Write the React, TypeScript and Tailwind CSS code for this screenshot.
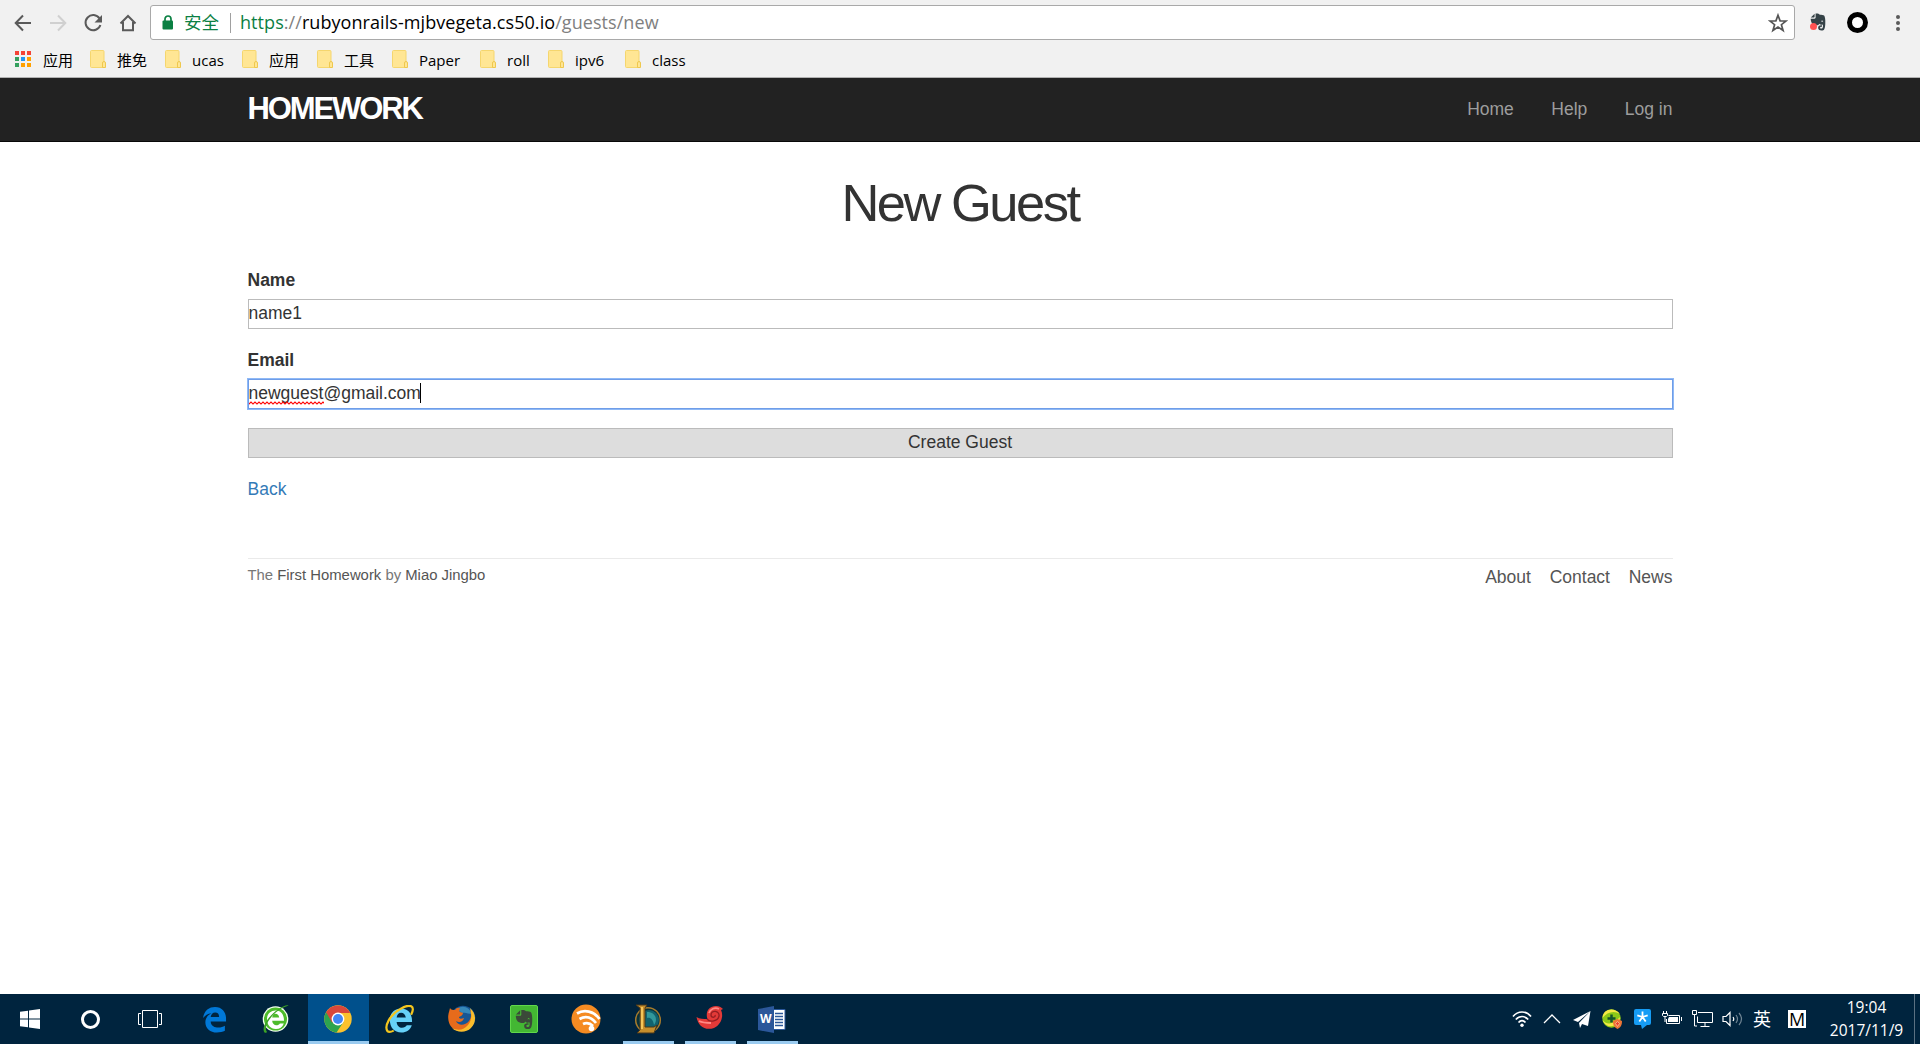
import type { ReactNode } from 'react';

const UI = "font-['Open_Sans','Noto_Sans_CJK_SC',sans-serif]";

const bookmarks = [
  { label: '推免', width: 75 },
  { label: 'ucas', width: 77 },
  { label: '应用', width: 75 },
  { label: '工具', width: 75 },
  { label: 'Paper', width: 88 },
  { label: 'roll', width: 68 },
  { label: 'ipv6', width: 77 },
  { label: 'class', width: 80 },
];

const appColors = ['#f44336', '#f44336', '#f44336', '#35a05e', '#2196f3', '#ffa000', '#35a05e', '#ffa000', '#ffa000'];

function Folder() {
  return (
    <svg width="17" height="20" viewBox="0 0 17 20" className="shrink-0">
      <rect x="0.5" y="1.5" width="13.5" height="17" rx="1" fill="#ffe694" stroke="#f5d66e" />
      <path d="M12.5 18.5v-4.5a1.2 1.2 0 0 1 3 0v4.5z" fill="#ffe694" stroke="#efc84e" />
    </svg>
  );
}

function Elephant({ className, fill }: { className: string; fill: string }) {
  return (
    <svg className={className} viewBox="0 0 16 18" fill={fill}>
      <path
        fillRule="evenodd"
        d="M.8 4.600 4.600.8v3a.8.8 0 0 1-.8.8zM5.600.6C7 .2 9 .6 9.800 1.700c1.700.1 3.600.3 4.300.9 1 1 1.400 4.800 1.200 7.800-.1 3.500-.7 7-2.800 7-2.300.2-4.300-.2-4.400-2.700 0-1.900 1.700-2.700 3.900-2.400v1.500c-1-.2-1.900 0-1.900.9 0 .9 1.200 1.100 2 .7 1-.6 1.100-2.400.7-3.900-1.200.6-2.800.3-3.600-.8-.5 1.400-2 1.800-3.700 1.300C1.800 11.400.9 9.100.7 5.700H4.500c.7 0 1.100-.4 1.100-1.100zM11.200 9c.5-.7 1.500-.6 2 .2-.3-2.300-2-2-2-.2z"
      />
    </svg>
  );
}

function Browser() {
  return (
    <header className={`h-[78px] border-b border-[#b2b2b2] bg-[#f1f1f1] ${UI}`}>
      <div className="flex h-[45px] items-center">
        <svg width="150" height="45" viewBox="0 0 150 45" fill="none" strokeWidth="2">
          <path d="M31 23H16M23 15.500 15.700 23l7.300 7.500" stroke="#5a5a5a" />
          <path d="M50 23h15M58 15.500 65.300 23 58 30.500" stroke="#d0d0d0" />
          <path d="M99.500 18.500A7.600 7.600 0 1 0 100.400 25" stroke="#5a5a5a" />
          <path d="M102 15v7.500h-7.500z" fill="#5a5a5a" />
          <path d="M120.500 23.500 128 16l7.500 7.500M123 22v8.300h10V22" stroke="#5a5a5a" />
        </svg>
        <div className="flex h-[35px] w-[1645px] items-center rounded-[3px] border border-[#a9a9a9] bg-white text-[18px]">
          <svg width="12" height="15" viewBox="0 0 12 15" className="ml-[11px] shrink-0">
            <path d="M3 6V4a3 3 0 0 1 6 0v2" fill="none" stroke="#0b8043" strokeWidth="1.700" />
            <rect x="0.500" y="5.500" width="10.500" height="9" rx="1" fill="#0b8043" />
          </svg>
          <span className="ml-[10px] w-[46px] whitespace-nowrap text-[17.5px] text-[#0b8043]">安全</span>
          <span className="mr-[9px] h-5 w-px bg-[#a0a0a0]" />
          <span className="whitespace-nowrap tracking-[0.065px] text-black">
            <span className="text-[#0b8043]">https</span><span className="text-[#808080]">://</span>rubyonrails-mjbvegeta.cs50.io<span className="text-[#808080]">/guests/new</span>
          </span>
          <svg width="20" height="20" viewBox="0 0 20 20" className="mr-[6px] ml-auto" fill="none" stroke="#555" strokeWidth="1.700">
            <path d="m10 2.200 2.100 5.600 6 .2-4.700 3.700 1.700 5.800-5.100-3.400-5.100 3.400 1.700-5.800L1.900 8l6-.2z" />
          </svg>
        </div>
        <div className="relative ml-[15px] h-[19px] w-[18px]">
          <Elephant className="h-[18px] w-[16px]" fill="#354247" />
          <span className="absolute top-[10px] left-0 size-[7px] rounded-full bg-[#ff5252]" />
        </div>
        <span className="ml-[19px] size-[21px] rounded-full border-[5px] border-black bg-white" />
        <div className="ml-[28px] flex flex-col gap-[2px]">
          <i className="size-[4px] rounded-full bg-[#5a5a5a]" />
          <i className="size-[4px] rounded-full bg-[#5a5a5a]" />
          <i className="size-[4px] rounded-full bg-[#5a5a5a]" />
        </div>
      </div>
      <nav className="flex h-[30px] items-center pl-[15px] text-[15px] text-black">
        <div className="flex w-[75px] items-center gap-[12px]">
          <div className="mb-[3px] grid grid-cols-3 gap-[2px]">
            {appColors.map((c, i) => <i key={i} className="size-[4px]" style={{ backgroundColor: c }} />)}
          </div>
          <span>应用</span>
        </div>
        {bookmarks.map((b, i) => (
          <div key={i} className="flex items-center gap-[10px] whitespace-nowrap" style={{ width: b.width }}>
            <div className="mb-[3px]"><Folder /></div>
            <span>{b.label}</span>
          </div>
        ))}
      </nav>
    </header>
  );
}

function Page() {
  return (
    <main className="flex-1 bg-white font-['Liberation_Sans',Arial,sans-serif] text-[17.5px] leading-[25px] text-[#333]">
      <div className="h-[64px] border-b border-[#080808] bg-[#222]">
        <div className="mx-auto flex h-full w-[1425px] items-center justify-between">
          <span className="mb-[2px] text-[31px] font-bold tracking-[-2.1px] text-white">HOMEWORK</span>
          <nav className="flex gap-[37.5px] text-[#9d9d9d]">
            <span>Home</span>
            <span>Help</span>
            <span>Log in</span>
          </nav>
        </div>
      </div>
      <div className="mx-auto w-[1425px]">
        <h1 className="mt-[32px] text-center text-[52.5px] leading-[58px] tracking-[-2.5px]">New Guest</h1>
        <div className="mt-[36px] font-bold">Name</div>
        <div className="mt-[6px] h-[30px] border border-[#bbb] leading-[27px]">name1</div>
        <div className="mt-[19px] font-bold">Email</div>
        <div className="mt-[6px] h-[30px] border border-[#6f9de8] leading-[27px] outline outline-[#8fb9f6]">
          <span className="relative inline-block">
            newguest@gmail.com
            <svg className="absolute top-[21px] left-0" width="75" height="4" viewBox="0 0 75 4">
              <defs>
                <pattern id="spell" width="4" height="4" patternUnits="userSpaceOnUse">
                  <path d="M-1 2 0 3 2 1 4 3 5 2" fill="none" stroke="#f00" strokeWidth="1.100" />
                </pattern>
              </defs>
              <rect width="75" height="4" fill="url(#spell)" />
            </svg>
            <i className="absolute top-[3px] right-0 h-5 w-px bg-black" />
          </span>
        </div>
        <div className="mt-[19px] h-[30px] border border-[#bbb] bg-[#ddd] text-center leading-[27px]">Create Guest</div>
        <div className="mt-[19px] text-[#337ab7]">Back</div>
        <footer className="mt-[56px] flex justify-between border-t border-[#eaeaea] text-[#777]">
          <small className="pt-[4px] text-[14.875px] leading-[25px]">
            The <span className="text-[#555]">First Homework</span> by <span className="text-[#555]">Miao Jingbo</span>
          </small>
          <nav className="flex gap-[18.75px] pt-[6px] text-[#555]">
            <span>About</span>
            <span>Contact</span>
            <span>News</span>
          </nav>
        </footer>
      </div>
    </main>
  );
}

function TaskApp({ children, open = false, active = false }: { children: ReactNode; open?: boolean; active?: boolean }) {
  return (
    <div className="relative flex h-full w-[62px] items-center justify-center">
      {active && <i className="absolute inset-y-0 left-px w-[61px] border-b-[3px] border-[#9acbf0] bg-[#00508c]" />}
      <div className="relative">{children}</div>
      {open && <i className="absolute bottom-0 left-[6px] h-[3px] w-[51px] bg-[#9acbf0]" />}
    </div>
  );
}

const edgePath =
  'M1 12.800C2.300 4.400 7.500 1 13.500 1 21 1 25 6.500 25 13v3H9c.3 5 4.500 6.300 8 6.300 2.700 0 4.900-.8 6.800-1.900v5.300C21.600 26.900 18.600 27.500 15.500 27.500 8.500 27.500 3.500 23 3.500 17c0-4.200 2.300-7.700 6.300-9.500C5.900 7.900 3 9.700 1 12.800zM9 11.500h8.800c0-3.300-1.400-4.700-4.100-4.700-2.600 0-4.200 1.900-4.700 4.700z';

const letterE =
  'M2 14C2 6.500 7 2 13.500 2 21 2 25 7 25 16H9c.3 4 3 6 5.500 6 2.500 0 4-1 5-2.500h5.200C23 24.500 19 27 14 27 6.500 27 2 21.500 2 14zM9 11.500h9.500C18 8 16 6.500 13.700 6.500 11 6.500 9.500 8.500 9 11.500z';

function Taskbar() {
  return (
    <footer className={`flex h-[50px] shrink-0 bg-[#00243e] text-white ${UI}`}>
      <div className="flex h-full w-[60px] items-center justify-center">
        <svg width="20" height="20" viewBox="0 0 20 20" fill="#fff">
          <path d="M0 2.800 8 1.700v7.800H0zM9 1.500 20 0v9.500H9zM0 10.500h8v7.800l-8-1.100zM9 10.500h11V20L9 18.500z" />
        </svg>
      </div>
      <div className="flex h-full w-[60px] items-center justify-center">
        <i className="size-[19px] rounded-full border-[3px] border-white" />
      </div>
      <div className="flex h-full w-[63px] items-center justify-center pr-[3px]">
        <svg width="24" height="19" viewBox="0 0 24 19" fill="none" stroke="#fff">
          <path d="M4.500.5h15v17h-15zM3 3.500H.5v11H3M21 3.500h2.500v11H21" />
        </svg>
      </div>
      <TaskApp>
        <svg width="25" height="27" viewBox="0 0 26 28"><path d={edgePath} fill="#0078d7" fillRule="evenodd" /></svg>
      </TaskApp>
      <TaskApp>
        <svg width="28" height="30" viewBox="0 0 28 30">
          <circle cx="13.500" cy="15" r="12.800" fill="#f4fff0" />
          <circle cx="13.500" cy="15" r="11.500" fill="#4dbb2b" />
          <g transform="translate(3.500 5) scale(.74)"><path d={letterE} fill="#fff" fillRule="evenodd" /></g>
          <path d="M2.500 28.500C-1 24 6 12 16 5.500 20 2.500 25 .500 26.500 1.500L24 2.500C16 5 7 14 4.500 21c-1 3-1 5 .5 7-1 1-1.700 1-2.500.5z" fill="#3ca226" />
        </svg>
      </TaskApp>
      <TaskApp active>
        <svg width="28" height="28" viewBox="0 0 28 28">
          <circle cx="14" cy="14" r="13.700" fill="#fbc22d" />
          <path d="M14 14 2.100 7.200A13.700 13.700 0 0 0 12.500 27.600L19.500 17z" fill="#2da44f" />
          <path d="M14 14 8 17.500 2.100 7.200A13.700 13.700 0 0 1 26.200 8H14z" fill="#d9473b" />
          <circle cx="14" cy="14" r="6.400" fill="#fff" />
          <circle cx="14" cy="14" r="5" fill="#4286f5" />
        </svg>
      </TaskApp>
      <TaskApp>
        <svg width="30" height="29" viewBox="0 0 31 30">
          <g transform="translate(3 1.500)"><path d={letterE} fill="#66d1f8" fillRule="evenodd" /></g>
          <path d="M27 10C32 1 26-2 16 4 5 10-1 22 2.500 27c1.500 1.500 4 .8 6.500-.5" fill="none" stroke="#f4c51d" strokeWidth="2.300" />
        </svg>
      </TaskApp>
      <TaskApp>
        <svg width="28" height="28" viewBox="0 0 28 28">
          <circle cx="15" cy="13" r="12.300" fill="#175694" />
          <path d="M9 4C15-1 22 3 24 9c-4 0-6-2-10-1z" fill="#3688b9" />
          <path d="M2 3c1 2 3 2 5 2 1-1.500 3-2.500 5-2-1 2-1 3 0 4l3 1c0 2-2 3-4 4 0 2 2 2 5 1-1 4-5 5-8 3 2 5 9 5 13 0 3-4 2-8 1-11 4 3 5 10 1 15-6 9-17 7-21 0C-.5 15 0 10 1 7z" fill="#e66b1b" />
          <path d="M22 3c6 5 7 14 1 20C18 28 9 28 4 23c6 3 12 2 16-3s4-11 2-17z" fill="#fbbd2b" />
        </svg>
      </TaskApp>
      <TaskApp>
        <div className="flex size-[28px] items-center justify-center rounded-[2px] border border-[#61d84b] bg-[#43b733]">
          <Elephant className="h-[21px] w-[18px]" fill="#3b4a39" />
        </div>
      </TaskApp>
      <TaskApp>
        <svg width="30" height="30" viewBox="0 0 30 30">
          <circle cx="15" cy="15" r="14.500" fill="#f58b22" />
          <path d="M6 9.500C13 5 23 7 28.500 15M8.500 15c6-3.500 12-1.500 16.500 4M12 20c4-2 7-1 10 2" fill="none" stroke="#fff" strokeWidth="2.700" />
          <circle cx="20.500" cy="24.500" r="2.800" fill="#fff" />
        </svg>
      </TaskApp>
      <TaskApp open>
        <svg width="28" height="30" viewBox="0 0 28 30">
          <circle cx="14" cy="16" r="12.300" fill="#09313a" stroke="#a67b2c" strokeWidth="1.500" />
          <circle cx="15" cy="16" r="10" fill="#11626e" />
          <path d="M13 8c9 0 11 8 7 13-1-6-4-8-7-7z" fill="#32989b" />
          <path d="M2 1h11l-2 3v19h9l3-2-3 8H3l3-3V4z" fill="#c58e2c" stroke="#49371a" />
          <path d="M7 3h2v22H7z" fill="#f4c55a" />
        </svg>
      </TaskApp>
      <TaskApp open>
        <svg width="28" height="25" viewBox="0 0 28 25" className="mb-[3px]">
          <path d="M.500 12c3 2 7 2 11 2C9 7 13 1 20 1c3 0 5 1 7 3l-2 1c3 6 0 15-7 18C9 26 2 21 .5 12z" fill="#e33a38" />
          <path d="M11 14c3 4 11 2 12-3s-8-7-8-1c0 3 5 3 4 0" fill="none" stroke="#941e22" strokeWidth="1.300" />
          <path d="M13 8c1-4 6-6 10-4M3 16c4 2 8 2 12 2" fill="none" stroke="#ff8984" strokeWidth="1.800" />
        </svg>
      </TaskApp>
      <TaskApp open>
        <div className="relative h-[27px] w-[28px]">
          <svg width="28" height="27" viewBox="0 0 28 27">
            <path d="M15 3.500h12v20H15z" fill="#fff" stroke="#2b579a" />
            <path d="M17 7.500h8M17 10.500h8M17 13.500h8M17 16.500h8M17 19.500h8" stroke="#2b579a" strokeWidth="1.300" />
            <path d="M0 3 16 0v27L0 24z" fill="#2b579a" />
          </svg>
          <span className="absolute top-[5px] left-[2px] text-[12px] leading-4 font-bold">W</span>
        </div>
      </TaskApp>

      <div className="ml-auto flex h-full items-center">
        {[
          <svg key="wifi" width="20" height="18" viewBox="0 0 20 18" fill="none" stroke="#fff" strokeWidth="1.700">
            <path d="M1 6.500C6 .500 14 .500 19 6.500M3.800 9.500c3.700-4 8.700-4 12.400 0M6.500 12.500c2.200-2.400 4.800-2.400 7 0" />
            <circle cx="10" cy="15.300" r="1.700" fill="#fff" stroke="none" />
          </svg>,
          <svg key="up" width="18" height="10" viewBox="0 0 18 10" fill="none" stroke="#fff" strokeWidth="1.300"><path d="m1 9 8-8 8 8" /></svg>,
          <svg key="plane" width="18" height="17" viewBox="0 0 18 17" fill="#fff"><path d="M17.500 0 0 9l5 2zM17.500 0 6 12l1 5 2-4 6 2z" /></svg>,
          <svg key="guard" width="20" height="20" viewBox="0 0 20 20">
            <circle cx="9.500" cy="9.500" r="9.200" fill="#8cc818" />
            <path d="M.5 9C1-1 13-2 18 5 12 1 5 3 .5 9zM.5 11c5 6 11 4 17.500-3 0 9-13 14-17.500 3z" fill="#f5e844" />
            <path d="M9.500 5.500v8M5.500 9.500h8" stroke="#14532b" strokeWidth="2.500" />
            <path d="m15.500 10 4.500 2c0 4-1 6-4.500 8-3.500-2-4.500-4-4.500-8z" fill="#ed7536" />
            <path d="m15.500 12.500 2 2-2 3-2-3z" fill="#e8432b" stroke="#f5c1a0" strokeWidth=".8" />
          </svg>,
          <svg key="star" width="17" height="20" viewBox="0 0 17 20">
            <path d="M2 0h13q2 0 2 2v12q0 2-2 2h-2l-5 4-1-4H2q-2 0-2-2V2q0-2 2-2z" fill="#169cf5" />
            <path d="M8.500 8V2.500M8.500 8l5.200-1.700M8.500 8l3.200 4.500M8.500 8l-3.200 4.500M8.500 8 3.300 6.300" stroke="#fff" strokeWidth="1.800" />
          </svg>,
          <svg key="battery" width="20" height="15" viewBox="0 0 20 15" fill="none" stroke="#fff" className="mb-[2px]">
            <path d="M1.500 0v2M4.500 0v2M.500 2.500h5v2l-1 1h-3l-1-1zM3 6v5M6.500 4.500h11v8h-13V8M19.500 6v4" />
            <path d="M7 6h9v5H6V8z" fill="#fff" stroke="none" />
          </svg>,
          <svg key="network" width="21" height="18" viewBox="0 0 21 18" fill="none" stroke="#fff">
            <path d="M6 2.500h14.500v10H5.500v-6M13 13v3.500M8.500 16.500h9M.500.500h4v4h-4zM2.500 5v11H5" />
          </svg>,
          <svg key="sound" width="21" height="16" viewBox="0 0 21 16" fill="none" stroke="#fff" strokeWidth="1.200">
            <path d="M1 5.500h3l4-4v13l-4-4H1zM11 6q1.500 2 0 4" />
            <path d="M14 4q3 4 0 8M17 2q5 6 0 12" stroke="#6f8594" />
          </svg>,
          <span key="lang" className="text-[18px] leading-5">英</span>,
        ].map((icon, i) => (
          <div key={i} className="flex w-[30px] items-center justify-center">{icon}</div>
        ))}
        <div className="ml-[11px] flex h-[18px] w-[18px] items-center justify-center bg-white text-[18px] leading-[18px] text-black">M</div>
        <div className="ml-[19px] w-[83px] text-center text-[15.5px] leading-[23px]">
          <div>19:04</div>
          <div>2017/11/9</div>
        </div>
        <i className="mr-[5px] ml-[6px] h-full w-px bg-[#5b7182]" />
      </div>
    </footer>
  );
}

export default function App() {
  return (
    <div className="flex h-[1044px] w-[1920px] flex-col overflow-hidden">
      <Browser />
      <Page />
      <Taskbar />
    </div>
  );
}
